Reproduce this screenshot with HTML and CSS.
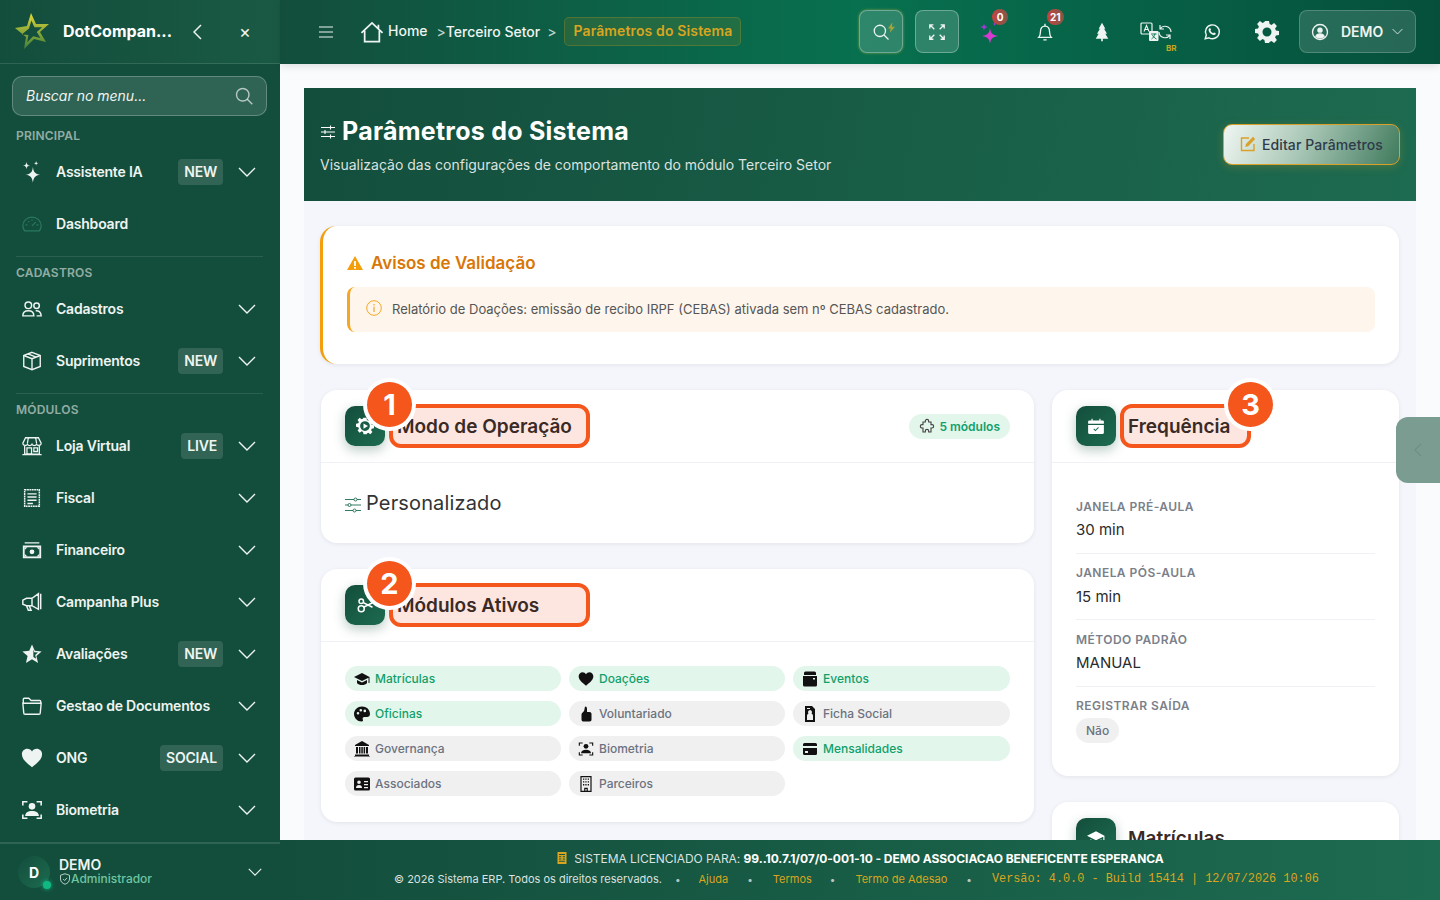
FILE: index.html
```html
<!DOCTYPE html>
<html lang="pt-BR">
<head>
    <meta charset="UTF-8">
    <meta name="viewport" content="width=device-width, initial-scale=1.0">
    <title>Parâmetros do Sistema</title>
    <link rel="stylesheet" href="styles.css">
</head>
<body>
    <!-- icones usados na pagina -->
    <svg class="sprite" xmlns="http://www.w3.org/2000/svg">
        <symbol id="i-chevron" viewBox="0 0 18 10"><path d="M1 1l8 8 8-8" fill="none" stroke="currentColor" stroke-width="1.4"/></symbol>
        <symbol id="i-sparkles" viewBox="0 0 24 24"><path fill="currentColor" d="M13 6.500c.9 6 2.300 7.500 8 8.500-5.700 1-7.100 2.500-8 8.500-.9-6-2.300-7.500-8-8.500 5.700-1 7.100-2.500 8-8.500zM6 1c.4 2.800 1.200 3.600 4 4-2.800.4-3.600 1.200-4 4-.4-2.800-1.200-3.600-4-4 2.800-.4 3.600-1.200 4-4zM16.500 0c.3 1.800.7 2.200 2.500 2.500-1.800.3-2.200.7-2.500 2.500-.3-1.800-.7-2.200-2.500-2.500 1.800-.3 2.200-.7 2.500-2.500z"/></symbol>
        <symbol id="i-gauge" viewBox="0 0 24 24"><g fill="none" stroke="currentColor" stroke-width="1.300"><path d="M4 19.500c-1.300-1.700-2-3.600-2-5.500C2 8.500 6.500 4.500 12 4.500S22 8.500 22 14c0 1.900-.7 3.800-2 5.500z"/><path d="M12 14l4-4M5 13h2M17 13h2M8 9l1 1M12 7v1.500"/></g></symbol>
        <symbol id="i-people" viewBox="0 0 24 24"><g fill="none" stroke="currentColor" stroke-width="1.600"><circle cx="8" cy="8" r="3.600"/><circle cx="17" cy="8.500" r="3"/><path d="M2 19.500c0-3.500 2.500-5.500 6-5.500s6 2 6 5.500zM16 14c3.500-.3 6 1.500 6 5.500h-5"/></g></symbol>
        <symbol id="i-box" viewBox="0 0 24 24"><g fill="none" stroke="currentColor" stroke-width="1.500"><path d="M12 2.500l9 3.500v12l-9 3.500-9-3.500V6z"/><path d="M3 6l9 3.500L21 6M12 9.500v12M7.500 4.300l9 3.500"/></g></symbol>
        <symbol id="i-shop" viewBox="0 0 24 24"><g fill="none" stroke="currentColor" stroke-width="1.400"><path d="M5 3h14l3 6c0 3-4 3-5 1-1 2-4 2-5 0-1 2-4 2-5 0-1 2-5 2-5-1zM4 12v9h16v-9M1.500 21.500h21"/><path d="M6.500 14h5v7h-5zM14 14h4v4h-4zM8 3L7 9M16 3l1 6"/></g></symbol>
        <symbol id="i-receipt" viewBox="0 0 24 24"><g fill="none" stroke="currentColor" stroke-width="1.600"><path stroke-dasharray="2 .6" d="M4 3h16v18H4z"/><path d="M7 7.500h10M7 11h10M7 14.500h10M7 18h6"/></g></symbol>
        <symbol id="i-cash" viewBox="0 0 24 24"><path fill="currentColor" d="M4 3.500h16V5H4zM2 7h20v14H2z"/><path fill="#134e3c" d="M4 9h16v10H4z"/><circle cx="12" cy="14" r="2.600" fill="currentColor"/><path fill="currentColor" d="M4 9h3l-3 3zM20 9h-3l3 3zM4 19h3l-3-3zM20 19h-3l3-3z"/></symbol>
        <symbol id="i-megaphone" viewBox="0 0 24 24"><g fill="none" stroke="currentColor" stroke-width="1.600"><path d="M2 10l4-2h6l7-5v17l-7-4H6l-4-1.500zM21.500 3v17M6 16l2 5h3l-2-5M12 8v8"/></g></symbol>
        <symbol id="i-starhalf" viewBox="0 0 24 24"><path fill="currentColor" d="M12 1.500l3 7 7.500.7-5.700 5 1.800 7.500L12 17.800 5.400 21.700l1.800-7.500-5.700-5L9 8.500z"/><path fill="#134e3c" d="M13.500 7l1 3 4 .4-3 2.700 1 4-3-1.800z"/></symbol>
        <symbol id="i-folder" viewBox="0 0 24 24"><g fill="none" stroke="currentColor" stroke-width="1.500"><path d="M2.500 9V4.500a1 1 0 0 1 1-1h5l2.500 2.500h9.500a1 1 0 0 1 1 1V9"/><path d="M2 9h20l-1 10.500a1.500 1.500 0 0 1-1.500 1.500h-15A1.500 1.500 0 0 1 3 19.500z"/></g></symbol>
        <symbol id="i-heart" viewBox="0 0 24 24"><path fill="currentColor" d="M12 22C5 16.500 1 13 1 8c0-3.500 2.700-6 5.800-6C9 2 11 3.100 12 5c1-1.900 3-3 5.200-3C20.300 2 23 4.500 23 8c0 5-4 8.500-11 14z"/></symbol>
        <symbol id="i-biometric" viewBox="0 0 24 24"><path fill="none" stroke="currentColor" stroke-width="1.700" d="M2 7V3h5M17 3h5v4M2 17v4h5M17 21h5v-4"/><circle cx="12" cy="8" r="3.600" fill="currentColor"/><path fill="currentColor" d="M4.500 18.500c0-3.500 3-5.500 7.500-5.500s7.500 2 7.500 5.500z"/></symbol>
        <symbol id="i-search" viewBox="0 0 24 24"><g fill="none" stroke="currentColor" stroke-width="1.700"><circle cx="10.500" cy="10.500" r="7.500"/><path d="M16 16l6 6"/></g></symbol>
        <symbol id="i-home" viewBox="0 0 26 24"><g fill="none" stroke="currentColor" stroke-width="1.900"><path d="M1.500 13L13 2l11.500 11M5 10.500V22.500h16V10.500M20 4v4"/></g></symbol>
        <symbol id="i-tune" viewBox="0 0 16 16"><path fill="none" stroke="currentColor" stroke-width="1.100" d="M1 3.500h14M1 8h14M1 12.500h14M10.500 1.500v4M5 6v4M10.500 10.500v4"/></symbol>
        <symbol id="i-expand" viewBox="0 0 20 20"><path fill="none" stroke="currentColor" stroke-width="1.500" d="M2 6V2h4M2 2l5 5M14 2h4v4M18 2l-5 5M2 14v4h4M2 18l5-5M14 18h4v-4M18 18l-5-5"/></symbol>
        <symbol id="i-bell" viewBox="0 0 24 24"><g fill="none" stroke="currentColor" stroke-width="1.600"><path d="M4.500 18.500c1.500-1.500 2-3 2-6.500 0-4 2-7 5.500-7s5.500 3 5.500 7c0 3.500.5 5 2 6.500z"/><path d="M12 2v3M10 21.500h4"/></g></symbol>
        <symbol id="i-tree" viewBox="0 0 24 24"><path fill="currentColor" d="M12 1l4 7h-1.500l3.500 6h-2l3.500 6H13v3h-2v-3H4.500L8 14H6l3.500-6H8z"/></symbol>
        <symbol id="i-whats" viewBox="0 0 24 24"><g fill="none" stroke="currentColor" stroke-width="1.900"><path d="M3 21l1.400-5A9.200 9.200 0 1 1 8 19.700z"/></g><path fill="currentColor" d="M8.700 7c.5-.4 1-.3 1.200.2l.7 1.600c.1.400 0 .7-.7 1.500.8 1.600 2 2.700 3.700 3.400.8-1 1.100-1.100 1.500-.9l1.600.8c.5.200.5.700.1 1.300-.8 1-2.200 1.300-3.900.6-2.600-1-4.300-2.700-5.200-5-.5-1.400-.2-2.600 1-3.500z"/></symbol>
        <symbol id="i-gear" viewBox="0 0 24 24"><path fill="currentColor" fill-rule="evenodd" d="M10 1h4l.6 3.100 1.900.8 2.600-1.800 2.800 2.800-1.800 2.600.8 1.900 3.100.6v4l-3.100.6-.8 1.900 1.800 2.600-2.800 2.800-2.600-1.800-1.900.8L14 23h-4l-.6-3.100-1.900-.8-2.600 1.800-2.800-2.800 1.800-2.600-.8-1.900L0 13v-4l3.100-.6.8-1.900L2.100 3.900l2.800-2.800 2.600 1.800 1.900-.8zM12 7.500a4.500 4.500 0 1 0 0 9 4.500 4.500 0 0 0 0-9z"/></symbol>
        <symbol id="i-user" viewBox="0 0 24 24"><circle cx="12" cy="12" r="10" fill="none" stroke="currentColor" stroke-width="1.800"/><circle cx="12" cy="9.500" r="3.600" fill="currentColor"/><path fill="currentColor" d="M5.500 18c1-3 3.500-4.300 6.500-4.300s5.500 1.300 6.500 4.300c-3.500 3.400-9.500 3.400-13 0z"/></symbol>
        <symbol id="i-warn" viewBox="0 0 16 16"><path fill="currentColor" fill-rule="evenodd" d="M8 1l8 14H0zM7.100 6h1.800v5H7.100zm0 6h1.800v1.700H7.100z"/></symbol>
        <symbol id="i-info" viewBox="0 0 16 16"><circle cx="8" cy="8" r="7.300" fill="none" stroke="currentColor" stroke-width="1"/><path fill="currentColor" d="M7.400 6.800h1.200V12H7.400zM7.400 4h1.200v1.400H7.400z"/></symbol>
        <symbol id="i-edit" viewBox="0 0 16 16"><g fill="none" stroke="currentColor" stroke-width="1.400"><path d="M14 8v6.500H1.500V2H9"/></g><path fill="currentColor" d="M13 .8l2.200 2.200-7 7.200-3 .8.800-3z"/></symbol>
        <symbol id="i-gearline" viewBox="0 0 24 24"><path fill="currentColor" fill-rule="evenodd" d="M10 1h4l.6 3.100 1.900.8 2.600-1.800 2.800 2.800-1.800 2.600.8 1.900 3.100.6v4l-3.100.6-.8 1.900 1.800 2.600-2.800 2.800-2.600-1.800-1.900.8L14 23h-4l-.6-3.100-1.900-.8-2.600 1.800-2.800-2.800 1.800-2.600-.8-1.900L0 13v-4l3.100-.6.8-1.900L2.100 3.900l2.800-2.800 2.600 1.800 1.900-.8zM12 5.500a6.500 6.500 0 1 0 0 13 6.500 6.500 0 0 0 0-13z"/><path fill="currentColor" d="M10 8.500L16 12l-6 3.500z"/></symbol>
        <symbol id="i-nodes" viewBox="0 0 24 24"><g fill="none" stroke="currentColor" stroke-width="2"><circle cx="7" cy="17" r="4"/><circle cx="7" cy="7" r="3"/><path d="M10 15l12-6M10 9l12 6"/></g></symbol>
        <symbol id="i-calendar" viewBox="0 0 16 16"><path fill="currentColor" d="M1 4a1 1 0 0 1 1-1h2V1.500h1V3h6V1.500h1V3h2a1 1 0 0 1 1 1v2H1zM1 7h14v7a1 1 0 0 1-1 1H2a1 1 0 0 1-1-1z"/><path fill="none" stroke="#1d6b50" stroke-width=".9" d="M6 10.500l1.500 1.500 2.700-2.700"/></symbol>
        <symbol id="i-puzzle" viewBox="0 0 24 24"><path fill="none" stroke="currentColor" stroke-width="1.700" d="M6 6h3.500V4.500a2.500 2.500 0 0 1 5 0V6H18v4h1.500a2.500 2.500 0 0 1 0 5H18v6h-3.500v-1.500a2.500 2.500 0 0 0-5 0V21H6v-6H4.500a2.500 2.500 0 0 1 0-5H6z"/></symbol>
        <symbol id="i-sliders" viewBox="0 0 16 16"><g fill="none" stroke="currentColor" stroke-width=".9"><path d="M0 2.500h9M12 2.500h4M0 8h3M6 8h10M0 13.500h8M11 13.500h5"/><circle cx="10.500" cy="2.500" r="1.500"/><circle cx="4.500" cy="8" r="1.500"/><circle cx="9.500" cy="13.500" r="1.500"/></g></symbol>
        <symbol id="i-grad" viewBox="0 0 16 16"><path fill="currentColor" d="M8 2L0 6l8 4 6.500-3.200V12h1V6zM3 9v3c1 1.500 3 2 5 2s4-.5 5-2V9l-5 2.500z"/></symbol>
        <symbol id="i-calfill" viewBox="0 0 16 16"><path fill="currentColor" d="M2 2a1.500 1.500 0 0 1 1.500-1.500h9A1.500 1.500 0 0 1 14 2v2H2zM1 5h14v9a1.500 1.500 0 0 1-1.500 1.500h-11A1.500 1.500 0 0 1 1 14z"/><path fill="#e3f6ec" d="M11 7h2v1.500h-2z"/></symbol>
        <symbol id="i-palette" viewBox="0 0 16 16"><path fill="currentColor" fill-rule="evenodd" d="M8 .5C3.500.5 0 4 0 8s3.500 7.500 7.500 7.500c1.500 0 1.800-1 1.300-2-.5-1.200 0-2.500 1.700-2.500H13c1.700 0 3-1 3-3C16 3.500 12.500.5 8 .5zM4 6a1.300 1.300 0 1 0 0 2.600A1.300 1.300 0 0 0 4 6zm2.800-3a1.300 1.300 0 1 0 0 2.600 1.300 1.300 0 0 0 0-2.600zm4 .6a1.300 1.300 0 1 0 0 2.600 1.300 1.300 0 0 0 0-2.600z"/></symbol>
        <symbol id="i-thumb" viewBox="0 0 16 16"><path fill="currentColor" d="M7.500.5c1 0 1.500 1 1.500 2.500v3h2.500c1.500 0 2 1 2 2v5.500c0 1-.5 2-2 2h-6c-1 0-2-.5-2-2V8.500C3.500 7 5 6.500 6 5c.8-1.500.5-4.500 1.500-4.500z"/></symbol>
        <symbol id="i-ficha" viewBox="0 0 16 16"><path fill="currentColor" fill-rule="evenodd" d="M3 0h7l3 3v13H3zm2 10v4h6v-4c0-1-.5-2-1.500-2.500a2 2 0 1 0-3 0C5.500 8 5 9 5 10zm0-8v1h3V2z"/></symbol>
        <symbol id="i-bank" viewBox="0 0 16 16"><path fill="currentColor" d="M8 0l7 4v1H1V4zM2 6h2v6.500H2zM5 6h1.500v6.500H5zM7.300 6h1.500v6.500H7.300zM9.600 6h1.500v6.500H9.600zM12 6h2v6.500h-2zM1 13.500h14V15H1zM0 15.500h16v.5H0z"/></symbol>
        <symbol id="i-cardfill" viewBox="0 0 16 16"><path fill="currentColor" fill-rule="evenodd" d="M1 3.500A1.500 1.500 0 0 1 2.500 2h11A1.500 1.500 0 0 1 15 3.500V5H1zM1 7h14v5.500a1.500 1.500 0 0 1-1.500 1.500h-11A1.500 1.500 0 0 1 1 12.500zm2 3v2h3v-2z"/></symbol>
        <symbol id="i-idcard" viewBox="0 0 16 16"><path fill="currentColor" fill-rule="evenodd" d="M1.500 1.500h13A1.500 1.500 0 0 1 16 3v10a1.500 1.500 0 0 1-1.500 1.500h-13A1.500 1.500 0 0 1 0 13V3a1.500 1.500 0 0 1 1.500-1.500zM5 4.500a1.800 1.800 0 1 0 0 3.600 1.800 1.800 0 0 0 0-3.600zM2 12h6c0-2-1-3-3-3s-3 1-3 3zm8-7v1.300h4V5zm0 3v1.300h4V8zm0 3v1.300h4V11z"/></symbol>
        <symbol id="i-building" viewBox="0 0 16 16"><path fill="none" stroke="currentColor" stroke-width="1.200" d="M3 .6h10v14.800H3zM6.800 15.400v-3h2.400v3"/><path fill="currentColor" d="M5 2.500h1.300v1.300H5zm2.300 0h1.300v1.300H7.300zm2.400 0H11v1.300H9.700zM5 5.300h1.300v1.300H5zm2.300 0h1.300v1.300H7.300zm2.400 0H11v1.300H9.700zM5 8.100h1.300v1.300H5zm2.300 0h1.300v1.300H7.300zm2.400 0H11v1.300H9.700z"/></symbol>
        <symbol id="i-shield" viewBox="0 0 16 16"><g fill="none" stroke="currentColor" stroke-width="1.100"><path d="M8 1l6 2v5c0 3.500-2.500 5.800-6 7-3.500-1.200-6-3.500-6-7V3z"/><path d="M5.500 8l2 2 3.200-3.500"/></g></symbol>
        <symbol id="i-license" viewBox="0 0 16 16"><path fill="currentColor" fill-rule="evenodd" d="M2 0h12v16H2zm2 2.500V4h8V2.500zm0 3V7h3V5.500zm5 0V7h3V5.500zm-5 3V10h3V8.500zm5 0V10h3V8.500zm-5 3V13h8v-1.500z"/></symbol>
    </svg>

    <aside class="sidebar">
        <div class="brand">
            <svg class="brand-logo" viewBox="0 0 35 37">
                <defs>
                    <linearGradient id="star-gold" x1="0" y1="0" x2="0" y2="1">
                        <stop offset="0" stop-color="#e2d836"/>
                        <stop offset="1" stop-color="#3f7f3c"/>
                    </linearGradient>
                </defs>
                <path fill="url(#star-gold)" fill-rule="evenodd" d="M16 0l5 11 13 0-9 8 6 10-12-3-10 10 2-12L0 15l12-2zM16.400 7.600l-2.400 7.800-7.200 6 6.600.6-1.200 7.200 6-6 7.200 1.800-3.600-6 5.400-4.800-7.800 0z"/>
            </svg>
            <span class="brand-name">DotCompan...</span>
            <svg class="brand-back" viewBox="0 0 9 16"><path d="M8 1L1 8l7 7" fill="none" stroke="currentColor" stroke-width="1.500"/></svg>
            <span class="brand-close">×</span>
        </div>

        <div class="menu-search">
            <span>Buscar no menu...</span>
            <svg class="ic-18"><use href="#i-search"/></svg>
        </div>

        <div class="menu-label first">PRINCIPAL</div>
        <a class="menu-item"><svg class="menu-ic"><use href="#i-sparkles"/></svg><span class="menu-text">Assistente IA</span><span class="menu-tag">NEW</span><svg class="menu-arrow"><use href="#i-chevron"/></svg></a>
        <a class="menu-item"><svg class="menu-ic dim"><use href="#i-gauge"/></svg><span class="menu-text">Dashboard</span></a>

        <div class="menu-divider"></div>
        <div class="menu-label">CADASTROS</div>
        <a class="menu-item"><svg class="menu-ic"><use href="#i-people"/></svg><span class="menu-text">Cadastros</span><svg class="menu-arrow"><use href="#i-chevron"/></svg></a>
        <a class="menu-item"><svg class="menu-ic"><use href="#i-box"/></svg><span class="menu-text">Suprimentos</span><span class="menu-tag">NEW</span><svg class="menu-arrow"><use href="#i-chevron"/></svg></a>

        <div class="menu-divider"></div>
        <div class="menu-label">MÓDULOS</div>
        <a class="menu-item"><svg class="menu-ic"><use href="#i-shop"/></svg><span class="menu-text">Loja Virtual</span><span class="menu-tag">LIVE</span><svg class="menu-arrow"><use href="#i-chevron"/></svg></a>
        <a class="menu-item"><svg class="menu-ic"><use href="#i-receipt"/></svg><span class="menu-text">Fiscal</span><svg class="menu-arrow"><use href="#i-chevron"/></svg></a>
        <a class="menu-item"><svg class="menu-ic"><use href="#i-cash"/></svg><span class="menu-text">Financeiro</span><svg class="menu-arrow"><use href="#i-chevron"/></svg></a>
        <a class="menu-item"><svg class="menu-ic"><use href="#i-megaphone"/></svg><span class="menu-text">Campanha Plus</span><svg class="menu-arrow"><use href="#i-chevron"/></svg></a>
        <a class="menu-item"><svg class="menu-ic"><use href="#i-starhalf"/></svg><span class="menu-text">Avaliações</span><span class="menu-tag">NEW</span><svg class="menu-arrow"><use href="#i-chevron"/></svg></a>
        <a class="menu-item"><svg class="menu-ic"><use href="#i-folder"/></svg><span class="menu-text">Gestao de Documentos</span><svg class="menu-arrow"><use href="#i-chevron"/></svg></a>
        <a class="menu-item"><svg class="menu-ic"><use href="#i-heart"/></svg><span class="menu-text">ONG</span><span class="menu-tag">SOCIAL</span><svg class="menu-arrow"><use href="#i-chevron"/></svg></a>
        <a class="menu-item"><svg class="menu-ic"><use href="#i-biometric"/></svg><span class="menu-text">Biometria</span><svg class="menu-arrow"><use href="#i-chevron"/></svg></a>

        <div class="side-user">
            <div class="avatar">D<i></i></div>
            <div class="side-user-info">
                <strong>DEMO</strong>
                <span><svg class="ic-12"><use href="#i-shield"/></svg>Administrador</span>
            </div>
            <svg class="side-user-arrow"><use href="#i-chevron"/></svg>
        </div>
    </aside>

    <div class="main">
        <header class="topbar">
            <svg class="burger" viewBox="0 0 14 12"><path d="M0 1h14M0 6h14M0 11h14" fill="none" stroke="currentColor" stroke-width="1.200"/></svg>
            <nav class="crumbs">
                <svg class="crumb-home"><use href="#i-home"/></svg>
                <span class="crumb-first">Home</span>
                <span class="crumb-sep">&gt;</span>
                <span class="crumb-mid">Terceiro Setor</span>
                <span class="crumb-sep two">&gt;</span>
                <span class="crumb-now">Parâmetros do Sistema</span>
            </nav>
            <div class="top-actions">
                <button class="top-btn glow"><svg class="ic-18"><use href="#i-search"/></svg><svg class="bolt" viewBox="0 0 8 12"><path fill="#a3a33a" d="M5 0L0 7h3l-1 5 6-7H4.500z"/></svg></button>
                <button class="top-btn"><svg class="ic-18"><use href="#i-expand"/></svg></button>
                <div class="top-ic left">
                    <svg class="ic-24" viewBox="0 0 24 24">
                        <path fill="#d63ad0" d="M12 8c.8 5.500 1.800 6.600 8 8-6.200 1.400-7.200 2.500-8 8-.8-5.500-1.800-6.600-8-8 6.200-1.400 7.200-2.500 8-8z"/>
                        <path fill="#a03ad6" d="M6 3c.4 2.700 1 3.400 4 4-3 .6-3.600 1.300-4 4-.4-2.700-1-3.400-4-4 3-.6 3.600-1.300 4-4zM16.500 2c.2 1.300.5 1.800 2 2-1.500.2-1.800.7-2 2-.2-1.300-.5-1.800-2-2 1.500-.2 1.800-.7 2-2z"/>
                    </svg>
                    <span class="count">0</span>
                </div>
                <div class="top-ic left"><svg class="ic-20"><use href="#i-bell"/></svg><span class="count">21</span></div>
                <div class="top-ic"><svg class="ic-20"><use href="#i-tree"/></svg></div>
                <div class="top-ic">
                    <svg class="translate" viewBox="0 0 33 20">
                        <rect x="1" y="1" width="11" height="11" rx="1" fill="none" stroke="currentColor" stroke-width="1.200"/>
                        <path d="M4 9.500L6.500 3.500 9 9.500M5 7.500h3" fill="none" stroke="currentColor" stroke-width="1.100"/>
                        <rect x="9" y="9" width="9.500" height="10" rx="1" fill="currentColor"/>
                        <path d="M11 12h5.500M15 11.500c-.5 3-2 4.500-3.500 5.500M12.500 13c.5 1.500 2 3 4 4" fill="none" stroke="#07704f" stroke-width=".9"/>
                        <path d="M31 10a6 6 0 0 0-11-3M19 10a6 6 0 0 0 11 3M20 3v4h4M30 17v-4h-4" fill="none" stroke="currentColor" stroke-width="1.200"/>
                    </svg>
                    <span class="lang">BR</span>
                </div>
                <div class="top-ic"><svg class="ic-18"><use href="#i-whats"/></svg></div>
                <div class="top-ic"><svg class="ic-24"><use href="#i-gear"/></svg></div>
                <button class="user-btn"><svg class="ic-18"><use href="#i-user"/></svg><span>DEMO</span><svg class="user-arrow"><use href="#i-chevron"/></svg></button>
            </div>
        </header>

        <div class="page">
            <section class="hero">
                <div>
                    <h1><svg class="hero-ic"><use href="#i-tune"/></svg>Parâmetros do Sistema</h1>
                    <p>Visualização das configurações de comportamento do módulo Terceiro Setor</p>
                </div>
                <button class="hero-btn"><svg class="ic-16"><use href="#i-edit"/></svg>Editar Parâmetros</button>
            </section>

            <div class="page-body">
                <section class="alert-card">
                    <h3><svg class="ic-16"><use href="#i-warn"/></svg>Avisos de Validação</h3>
                    <div class="alert-line"><svg class="ic-16"><use href="#i-info"/></svg><span>Relatório de Doações: emissão de recibo IRPF (CEBAS) ativada sem nº CEBAS cadastrado.</span></div>
                </section>

                <div class="columns">
                    <div class="col">
                        <section class="card">
                            <div class="card-head">
                                <span class="head-ic"><svg class="ic-18"><use href="#i-gearline"/></svg></span>
                                <h2 class="marked wide">Modo de Operação<b class="step">1</b></h2>
                                <span class="pill"><svg class="ic-16"><use href="#i-puzzle"/></svg>5 módulos</span>
                            </div>
                            <div class="mode-body"><svg class="ic-16 green"><use href="#i-sliders"/></svg>Personalizado</div>
                        </section>

                        <section class="card">
                            <div class="card-head">
                                <span class="head-ic"><svg class="ic-18"><use href="#i-nodes"/></svg></span>
                                <h2 class="marked wide">Módulos Ativos<b class="step">2</b></h2>
                            </div>
                            <div class="chips">
                                <span class="chip on"><svg class="ic-16"><use href="#i-grad"/></svg>Matrículas</span>
                                <span class="chip on"><svg class="ic-16"><use href="#i-heart"/></svg>Doações</span>
                                <span class="chip on"><svg class="ic-16"><use href="#i-calfill"/></svg>Eventos</span>
                                <span class="chip on"><svg class="ic-16"><use href="#i-palette"/></svg>Oficinas</span>
                                <span class="chip"><svg class="ic-16"><use href="#i-thumb"/></svg>Voluntariado</span>
                                <span class="chip"><svg class="ic-16"><use href="#i-ficha"/></svg>Ficha Social</span>
                                <span class="chip"><svg class="ic-16"><use href="#i-bank"/></svg>Governança</span>
                                <span class="chip"><svg class="ic-16"><use href="#i-biometric"/></svg>Biometria</span>
                                <span class="chip on"><svg class="ic-16"><use href="#i-cardfill"/></svg>Mensalidades</span>
                                <span class="chip"><svg class="ic-16"><use href="#i-idcard"/></svg>Associados</span>
                                <span class="chip"><svg class="ic-16"><use href="#i-building"/></svg>Parceiros</span>
                            </div>
                        </section>
                    </div>

                    <div class="col">
                        <section class="card">
                            <div class="card-head">
                                <span class="head-ic"><svg class="ic-18"><use href="#i-calendar"/></svg></span>
                                <h2 class="marked narrow">Frequência<b class="step right">3</b></h2>
                            </div>
                            <div class="params">
                                <div class="param"><label>JANELA PRÉ-AULA</label><div>30 min</div></div>
                                <div class="param"><label>JANELA PÓS-AULA</label><div>15 min</div></div>
                                <div class="param"><label>MÉTODO PADRÃO</label><div>MANUAL</div></div>
                                <div class="param"><label>REGISTRAR SAÍDA</label><span class="no">Não</span></div>
                            </div>
                        </section>

                        <section class="card">
                            <div class="card-head">
                                <span class="head-ic"><svg class="ic-18"><use href="#i-grad"/></svg></span>
                                <h2>Matrículas</h2>
                            </div>
                        </section>
                    </div>
                </div>
            </div>
        </div>

        <footer class="footer">
            <div class="footer-top"><svg class="ic-12 gold"><use href="#i-license"/></svg>SISTEMA LICENCIADO PARA: <strong>99..10.7.1/07/0-001-10 - DEMO ASSOCIACAO BENEFICENTE ESPERANCA</strong></div>
            <div class="footer-links">
                <span>© 2026 Sistema ERP. Todos os direitos reservados.</span>
                <i>•</i><a>Ajuda</a>
                <i>•</i><a>Termos</a>
                <i>•</i><a>Termo de Adesao</a>
                <i>•</i><code>Versão: 4.0.0 - Build 15414 | 12/07/2026 10:06</code>
            </div>
        </footer>
    </div>

    <div class="side-tab"><svg viewBox="0 0 9 16"><path d="M8 1L1 8l7 7" fill="none" stroke="currentColor" stroke-width="1.200"/></svg></div>
</body>
</html>
```

FILE: styles.css
```css
* {
    box-sizing: border-box;
}

body {
    margin: 0;
    height: 100vh;
    display: flex;
    overflow: hidden;
    font-family: Inter, "Noto Sans", sans-serif;
    background-color: #fafbfd;
    color: #2b2b2b;
}

h1, h2, h3, p {
    margin: 0;
}

button {
    font-family: inherit;
    cursor: pointer;
}

.sprite {
    display: none;
}

.ic-12 { width: 12px; height: 12px; flex: none; }
.ic-16 { width: 16px; height: 16px; flex: none; }
.ic-18 { width: 18px; height: 18px; flex: none; }
.ic-20 { width: 20px; height: 20px; flex: none; }
.ic-24 { width: 24px; height: 24px; flex: none; }

/* menu lateral */
.sidebar {
    width: 280px;
    flex: none;
    height: 100vh;
    display: flex;
    flex-direction: column;
    background-color: #134e3c;
    color: #eef4f1;
}

.brand {
    height: 64px;
    flex: none;
    display: flex;
    align-items: center;
    padding: 0 29px 0 15px;
    border-bottom: 1px solid rgba(255, 255, 255, 0.12);
    background: linear-gradient(90deg, #134e3c, #1a5a44);
}

.brand-logo {
    width: 35px;
    height: 37px;
    flex: none;
}

.brand-name {
    width: 111px;
    margin: -2px 0 0 13px;
    font-size: 16px;
    font-weight: 700;
    color: #fff;
    white-space: nowrap;
}

.brand-back {
    width: 9px;
    height: 16px;
    margin-left: 19px;
    flex: none;
}

.brand-close {
    margin-left: auto;
    font-size: 18px;
    line-height: 1;
}

.menu-search {
    flex: none;
    height: 40px;
    margin: 12px 13px 0 12px;
    padding: 0 12px 0 13px;
    display: flex;
    align-items: center;
    justify-content: space-between;
    border: 1px solid rgba(255, 255, 255, 0.25);
    border-radius: 10px;
    background-color: rgba(255, 255, 255, 0.12);
    font-size: 14px;
    font-style: italic;
}

.menu-search span {
    margin-top: -1px;
}

.menu-search svg {
    width: 20px;
    height: 20px;
    color: rgba(255, 255, 255, 0.65);
}

.menu-label {
    flex: none;
    height: 16px;
    margin: 8px 16px 2px;
    font-size: 12px;
    font-weight: 600;
    line-height: 16px;
    letter-spacing: 0.2px;
    color: rgba(255, 255, 255, 0.55);
}

.menu-label.first {
    margin-top: 12px;
}

.menu-divider {
    flex: none;
    height: 1px;
    margin: 6px 17px 0 16px;
    background-color: rgba(255, 255, 255, 0.1);
}

.menu-item {
    flex: none;
    height: 52px;
    display: flex;
    align-items: center;
    padding: 0 24px 0 21px;
}

.menu-ic {
    width: 22px;
    height: 22px;
    flex: none;
}

.menu-ic.dim {
    color: #2a7a5e;
}

.menu-text {
    margin: -2px 0 0 13px;
    font-size: 14px;
    font-weight: 600;
    letter-spacing: -0.2px;
    white-space: nowrap;
}

.menu-tag {
    margin-left: auto;
    padding: 0 6px;
    height: 26px;
    border-radius: 4px;
    background-color: rgba(255, 255, 255, 0.13);
    font-size: 14px;
    font-weight: 600;
    letter-spacing: -0.2px;
    line-height: 26px;
}

.menu-arrow {
    width: 18px;
    height: 10px;
    margin-left: 15px;
    flex: none;
}

.menu-text + .menu-arrow {
    margin-left: auto;
}

.side-user {
    margin-top: auto;
    height: 58px;
    flex: none;
    display: flex;
    align-items: center;
    padding: 0 18px;
    border-top: 2px solid rgba(255, 255, 255, 0.12);
}

.avatar {
    position: relative;
    width: 32px;
    height: 32px;
    flex: none;
    display: flex;
    align-items: center;
    justify-content: center;
    border-radius: 50%;
    background: linear-gradient(135deg, #134e3c, #1d6b50);
    font-size: 14px;
    font-weight: 700;
    color: #fff;
}

.avatar i {
    position: absolute;
    right: -1px;
    bottom: -1px;
    width: 8px;
    height: 8px;
    border-radius: 50%;
    background-color: #10b981;
    box-shadow: 0 0 4px #10b981;
}

.side-user-info {
    margin: -1px 0 0 9px;
    display: flex;
    flex-direction: column;
}

.side-user-info strong {
    font-size: 14px;
    font-weight: 600;
    line-height: 14px;
}

.side-user-info span {
    display: flex;
    align-items: center;
    font-size: 12px;
    font-weight: 500;
    line-height: 13px;
    color: #6fc5a2;
}

.side-user-info svg {
    color: #d7e9e1;
}

.side-user-arrow {
    width: 14px;
    height: 8px;
    margin-left: auto;
}

/* area principal */
.main {
    flex: 1;
    min-width: 0;
    height: 100vh;
    display: flex;
    flex-direction: column;
}

.topbar {
    height: 64px;
    flex: none;
    display: flex;
    align-items: center;
    padding: 0 24px 1px 39px;
    background: linear-gradient(90deg, #134e3c 0%, #07704f 50%, #06503b 100%);
    color: #eef4f1;
    box-shadow: 0 2px 8px rgba(0, 0, 0, 0.12);
    position: relative;
}

.burger {
    width: 14px;
    height: 12px;
    flex: none;
    margin-top: 1px;
}

.crumbs {
    display: flex;
    align-items: center;
    margin-left: 27px;
    font-size: 14px;
    font-weight: 500;
}

.crumb-home {
    width: 24px;
    height: 22px;
    margin: 1px 4px 0 0;
}

.crumb-first {
    margin-top: -2px;
}

.crumb-mid {
    margin-top: -1px;
}

.crumb-sep {
    margin: -1px 0 0 9px;
    font-weight: 400;
    opacity: 0.8;
}

.crumb-sep.two {
    margin: -1px 8px 0 7px;
}

.crumb-now {
    height: 29px;
    padding: 0 8px;
    border: 1px solid rgba(212, 160, 23, 0.25);
    border-radius: 5px;
    background-color: rgba(212, 160, 23, 0.12);
    font-weight: 600;
    line-height: 26px;
    letter-spacing: 0.13px;
    color: #d9a520;
}

.top-actions {
    margin-left: auto;
    display: flex;
    align-items: center;
}

.top-btn {
    position: relative;
    width: 44px;
    height: 43px;
    margin-right: 12px;
    display: flex;
    align-items: center;
    justify-content: center;
    border: 1px solid rgba(255, 255, 255, 0.3);
    border-radius: 8px;
    background-color: rgba(255, 255, 255, 0.16);
    color: #eef4f1;
}

.top-btn + .top-ic {
    margin-left: -7px;
}

.top-btn.glow {
    box-shadow: 0 0 3px rgba(212, 190, 60, 0.6);
}

.bolt {
    position: absolute;
    top: 11px;
    right: 7px;
    width: 7px;
    height: 11px;
}

.top-ic {
    position: relative;
    width: 55px;
    height: 43px;
    display: flex;
    align-items: center;
    justify-content: center;
}

.top-ic.left {
    padding-right: 4px;
}

.count {
    position: absolute;
    top: -1px;
    left: 28px;
    min-width: 16px;
    height: 16px;
    padding: 0 3px;
    border-radius: 8px;
    background: linear-gradient(90deg, #c8423f, #7b5a4a);
    font-size: 10px;
    font-weight: 700;
    line-height: 16px;
    text-align: center;
    color: #fff;
}

.translate {
    width: 33px;
    height: 20px;
}

.lang {
    position: absolute;
    left: 37px;
    bottom: 0;
    font-size: 8px;
    font-weight: 700;
    color: #c9a520;
}

.user-btn {
    width: 117px;
    height: 43px;
    margin-left: 5px;
    display: flex;
    align-items: center;
    padding: 0 12px 0 11px;
    border: 1px solid rgba(255, 255, 255, 0.2);
    border-radius: 8px;
    background-color: rgba(255, 255, 255, 0.13);
    font-size: 14px;
    font-weight: 600;
    color: #eef4f1;
}

.user-btn span {
    margin-left: 12px;
}

.user-arrow {
    width: 11px;
    height: 7px;
    margin-left: auto;
}

.page {
    flex: 1;
    min-height: 0;
    margin: 24px 24px 0;
    overflow: hidden;
    background-color: #f4f6fb;
}

.hero {
    height: 113px;
    display: flex;
    align-items: center;
    justify-content: space-between;
    padding: 0 16px;
    background: linear-gradient(100deg, #134e3c, #1d6b50);
    color: #fff;
}

.hero h1 {
    display: flex;
    align-items: center;
    margin-top: -2px;
    font-size: 25px;
    font-weight: 700;
    line-height: 32px;
    letter-spacing: 0.25px;
}

.hero-ic {
    width: 16px;
    height: 16px;
    margin-right: 6px;
    margin-top: 2px;
}

.hero p {
    margin-top: 9px;
    font-size: 14px;
    color: rgba(255, 255, 255, 0.85);
}

.hero-btn {
    width: 177px;
    height: 41px;
    display: flex;
    align-items: center;
    justify-content: center;
    gap: 6px;
    padding: 0 0 1px;
    border: 1px solid #d9a02a;
    border-radius: 9px;
    background: linear-gradient(115deg, #f0f6f2 0%, #a9c7b6 45%, #3f7a5c 100%);
    box-shadow: 0 2px 8px rgba(217, 160, 42, 0.25);
    font-size: 14px;
    font-weight: 500;
    letter-spacing: 0.1px;
    color: #2f3a4a;
}

.hero-btn svg {
    color: #d9a02a;
}

.page-body {
    padding: 25px 17px 0 16px;
}

.alert-card {
    height: 138px;
    padding: 24px 24px 0;
    border-left: 3px solid #f59e0b;
    border-radius: 16px;
    background-color: #fff;
    box-shadow: 0 1px 4px rgba(20, 30, 60, 0.08);
}

.alert-card h3 {
    display: flex;
    align-items: center;
    gap: 8px;
    padding-top: 1px;
    height: 24px;
    font-size: 17px;
    font-weight: 600;
    line-height: 24px;
    color: #d97706;
}

.alert-card h3 svg {
    color: #f59e0b;
}

.alert-line {
    height: 45px;
    margin-top: 13px;
    padding: 0 16px;
    display: flex;
    align-items: center;
    gap: 10px;
    border-left: 3px solid #f5a623;
    border-radius: 8px;
    background-color: #fef6ec;
    font-size: 13px;
    color: #555;
}

.alert-line span {
    margin-top: -1px;
}

.alert-line svg {
    color: #f5a623;
    margin-top: -3px;
}

.columns {
    display: grid;
    grid-template-columns: 713px 347px;
    gap: 18px;
    margin: 26px 0 0 1px;
}

.col {
    display: flex;
    flex-direction: column;
    gap: 26px;
}

.card {
    border-radius: 16px;
    background-color: #fff;
    box-shadow: 0 1px 4px rgba(20, 30, 60, 0.08);
}

.card-head {
    height: 73px;
    display: flex;
    align-items: center;
    gap: 12px;
    padding: 0 24px;
    border-bottom: 1px solid #f0f1f4;
}

.head-ic {
    width: 40px;
    height: 40px;
    flex: none;
    display: flex;
    align-items: center;
    justify-content: center;
    border-radius: 10px;
    background: linear-gradient(135deg, #134e3c, #1d6b50);
    box-shadow: 0 4px 12px rgba(19, 78, 60, 0.3);
    color: #fff;
}

.card-head h2 {
    font-size: 19px;
    font-weight: 600;
    color: #3a2a26;
}

/* destaque numerado por cima do titulo */
.marked {
    position: relative;
    height: 44px;
    margin-left: -8px;
    padding: 0 4px;
    border: 4px solid #f4561c;
    border-radius: 12px;
    background-color: #fde6df;
    line-height: 38px;
    white-space: nowrap;
}

.marked.wide {
    width: 201px;
}

.marked.narrow {
    width: 131px;
}

.step {
    position: absolute;
    left: -26px;
    top: -26px;
    width: 45px;
    height: 45px;
    border-radius: 50%;
    background-color: #f4561c;
    box-shadow: 0 0 0 4px #fff;
    font-size: 29px;
    font-weight: 700;
    line-height: 45px;
    text-align: center;
    color: #fff;
}

.step.right {
    left: 104px;
}

.pill {
    margin-left: auto;
    height: 25px;
    display: flex;
    align-items: center;
    gap: 4px;
    padding: 0 10px;
    border-radius: 13px;
    background-color: #e3f6ec;
    font-size: 12px;
    font-weight: 600;
    color: #10a06a;
}

.pill svg {
    color: #444;
}

.mode-body {
    height: 80px;
    display: flex;
    align-items: center;
    gap: 5px;
    padding: 0 24px;
    font-size: 20px;
    letter-spacing: 0.15px;
    color: #333;
}

.mode-body svg {
    margin-top: 4px;
}

.green {
    color: #1d6b50;
}

.chips {
    display: grid;
    grid-template-columns: 216px 216px 217px;
    gap: 10px 8px;
    padding: 24px 24px 26px;
}

.chip {
    height: 25px;
    display: flex;
    align-items: center;
    gap: 5px;
    padding: 0 9px;
    border-radius: 13px;
    background-color: #f0f0f0;
    font-size: 12px;
    font-weight: 500;
    color: #6b7280;
}

.chip svg {
    color: #111;
}

.chip.on {
    background-color: #e3f6ec;
    color: #10a06a;
}

.params {
    padding: 24px 24px 22px;
}

.param {
    padding: 11.5px 0 11.6px;
    border-bottom: 1px solid #f0f1f4;
}

.param:last-child {
    border-bottom: none;
}

.param label {
    display: block;
    margin-bottom: 3.5px;
    font-size: 12px;
    font-weight: 600;
    line-height: 16px;
    letter-spacing: 0.45px;
    color: #7b7f8a;
}

.param div {
    font-size: 15px;
    line-height: 23px;
}

.no {
    display: block;
    width: fit-content;
    height: 25px;
    padding: 0 10px;
    border-radius: 13px;
    background-color: #f0f0f0;
    font-size: 12px;
    font-weight: 500;
    line-height: 25px;
    color: #6b7280;
}

/* rodape */
.footer {
    height: 60px;
    flex: none;
    position: relative;
    z-index: 1;
    padding-top: 9px;
    background: linear-gradient(90deg, #134e3c, #1d6b50);
    color: rgba(255, 255, 255, 0.85);
    text-align: center;
}

.footer-top {
    display: flex;
    align-items: center;
    justify-content: center;
    gap: 6px;
    height: 18px;
    font-size: 12px;
    letter-spacing: -0.05px;
    white-space: pre;
}

.footer-top strong {
    margin-left: -6px;
    font-weight: 700;
    color: #fff;
    letter-spacing: -0.06px;
}

.gold {
    color: #d9a520;
}

.footer-links {
    display: flex;
    align-items: center;
    height: 23px;
    padding-left: 114px;
    font-size: 11px;
    white-space: nowrap;
}

.footer-links i {
    margin: 0 20px 0 19px;
    font-style: normal;
    font-size: 10px;
    opacity: 0.8;
}

.footer-links i:first-of-type {
    margin: 0 18px 0 13px;
}

.footer-links i:nth-of-type(3) {
    margin: 0 20px 0 18px;
}

.footer-links a {
    color: #d9a520;
}

.footer-links code {
    margin-top: 1px;
    font-family: "Liberation Mono", monospace;
    font-size: 11.85px;
    color: #d9a520;
}

.side-tab {
    position: fixed;
    top: 417px;
    right: 0;
    width: 44px;
    height: 66px;
    display: flex;
    align-items: center;
    padding-left: 18px;
    border-radius: 12px 0 0 12px;
    background-color: #7b9c90;
    color: #6d8e82;
}

.side-tab svg {
    width: 8px;
    height: 14px;
}
```
